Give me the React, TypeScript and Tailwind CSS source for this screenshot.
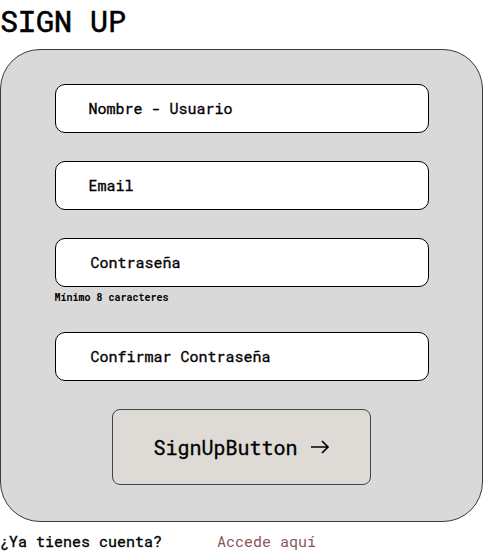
const mono = "font-['Roboto_Mono','DejaVu_Sans_Mono','Liberation_Mono',monospace]";
const thick = "[-webkit-text-stroke:0.35px_black]";

const fields = [
  { label: "Nombre - Usuario", pad: "pl-[33px]" },
  { label: "Email", pad: "pl-[33px]" },
];

function Field({ label, pad }: { label: string; pad: string }) {
  return (
    <div
      className={`flex h-[49px] w-[374px] items-center rounded-[10px] border border-black bg-white ${pad} text-[15px] text-black ${thick}`}
    >
      {label}
    </div>
  );
}

export default function App() {
  return (
    <div className={`${mono} h-[552px] w-[483px] overflow-hidden bg-white text-black`}>
      <h1 className={`flex h-[49px] items-start pt-[3px] text-[30px] leading-[36px] font-normal [-webkit-text-stroke:0.6px_black]`}>
        SIGN UP
      </h1>

      <div className="flex h-[473px] w-[483px] flex-col items-center rounded-[40px] border border-[#3a3a3a] bg-[#d9d9d9] pt-[34px]">
        <div className="flex flex-col gap-[28px]">
          {fields.map((f) => (
            <Field key={f.label} label={f.label} pad={f.pad} />
          ))}
          <div>
            <Field label="Contraseña" pad="pl-[35px]" />
            <p className="mt-[4px] text-[10px] leading-[13px] font-bold">
              Mínimo 8 caracteres
            </p>
          </div>
        </div>

        <div className="mt-[28px]">
          <Field label="Confirmar Contraseña" pad="pl-[35px]" />
        </div>

        <button className={`mt-[28px] flex h-[76px] w-[259px] items-center justify-center gap-[12px] rounded-[8px] border border-[#444] bg-[#dedbd6] text-[20px] text-black ${thick}`}>
          SignUpButton
          <svg width="20" height="14" viewBox="0 0 20 14" fill="none" stroke="black" strokeWidth="1.7">
            <path d="M1 7h17M12 1l6 6-6 6" />
          </svg>
        </button>
      </div>

      <div className="flex pt-[10px] text-[15px] leading-[18px]">
        <span className={thick}>¿Ya tienes cuenta?</span>
        <span className="ml-[55px] text-[#8a5656]">Accede aquí</span>
      </div>
    </div>
  );
}
